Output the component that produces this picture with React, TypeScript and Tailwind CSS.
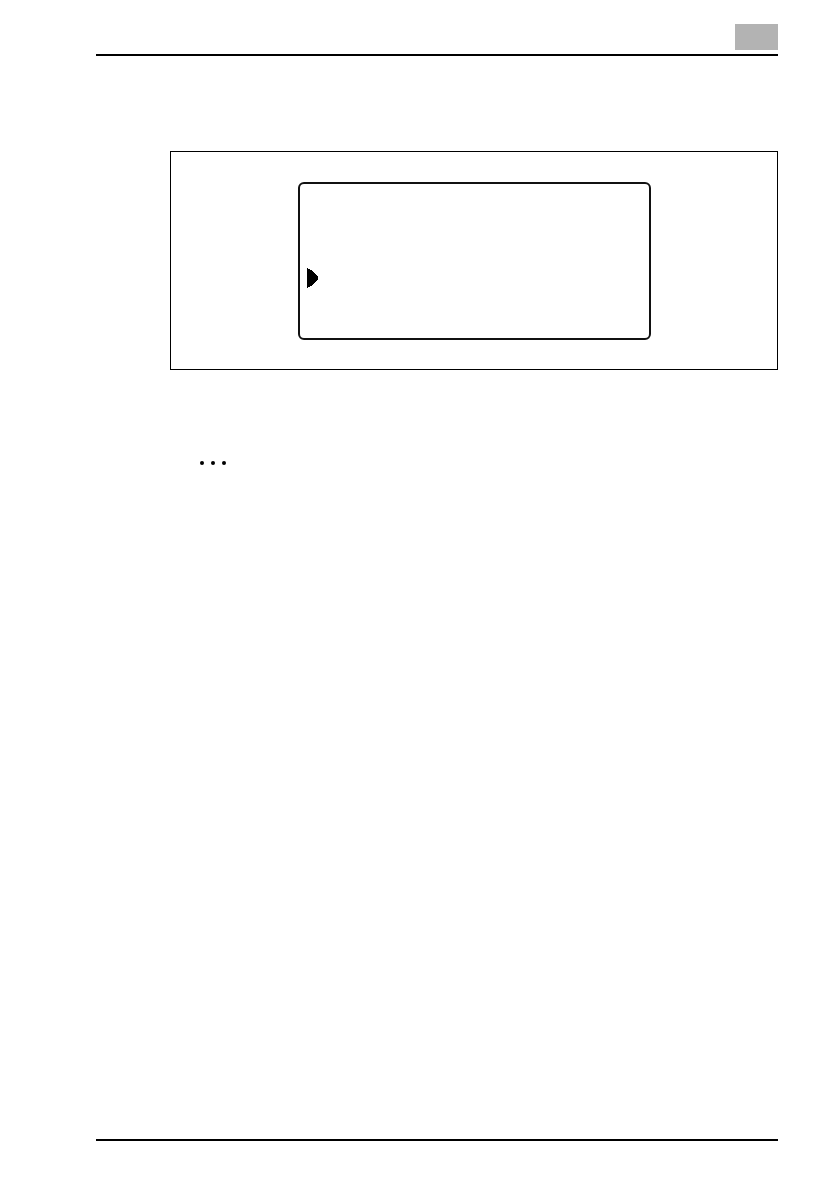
const App = () => {
  return (
    <div className="w-[840px] h-[1190px] bg-white flex flex-col pl-[96px] pr-[62px]">
      {/* HEADER */}
      <div className="flex justify-end pt-[24px]">
        <div className="w-[43px] h-[26px] bg-[#b3b3b3]" />
      </div>
      <div className="mt-[4px] h-[2px] bg-black" />

      {/* FIGURE */}
      <div className="ml-[74px] mt-[95px] h-[219px] border border-black">
        <div className="ml-[127px] mt-[30px] w-[353px] h-[158px] border-2 border-[#111] rounded-[6px] pl-[7px] pt-[84px]">
          <svg width="12" height="20" viewBox="0 0 12 20" shapeRendering="crispEdges">
            <polygon points="0,0 4,2 11,9 11,11 4,18 0,20" fill="#000" />
          </svg>
        </div>
      </div>

      {/* NOTE */}
      <div className="ml-[104px] mt-[91px] flex gap-[7px]">
        <span className="w-[4px] h-[4px] rounded-full bg-black" />
        <span className="w-[4px] h-[4px] rounded-full bg-black" />
        <span className="w-[4px] h-[4px] rounded-full bg-black" />
      </div>

      {/* FOOTER */}
      <div className="mt-auto mb-[49px] h-[2px] bg-black" />
    </div>
  );
};

export default App;
